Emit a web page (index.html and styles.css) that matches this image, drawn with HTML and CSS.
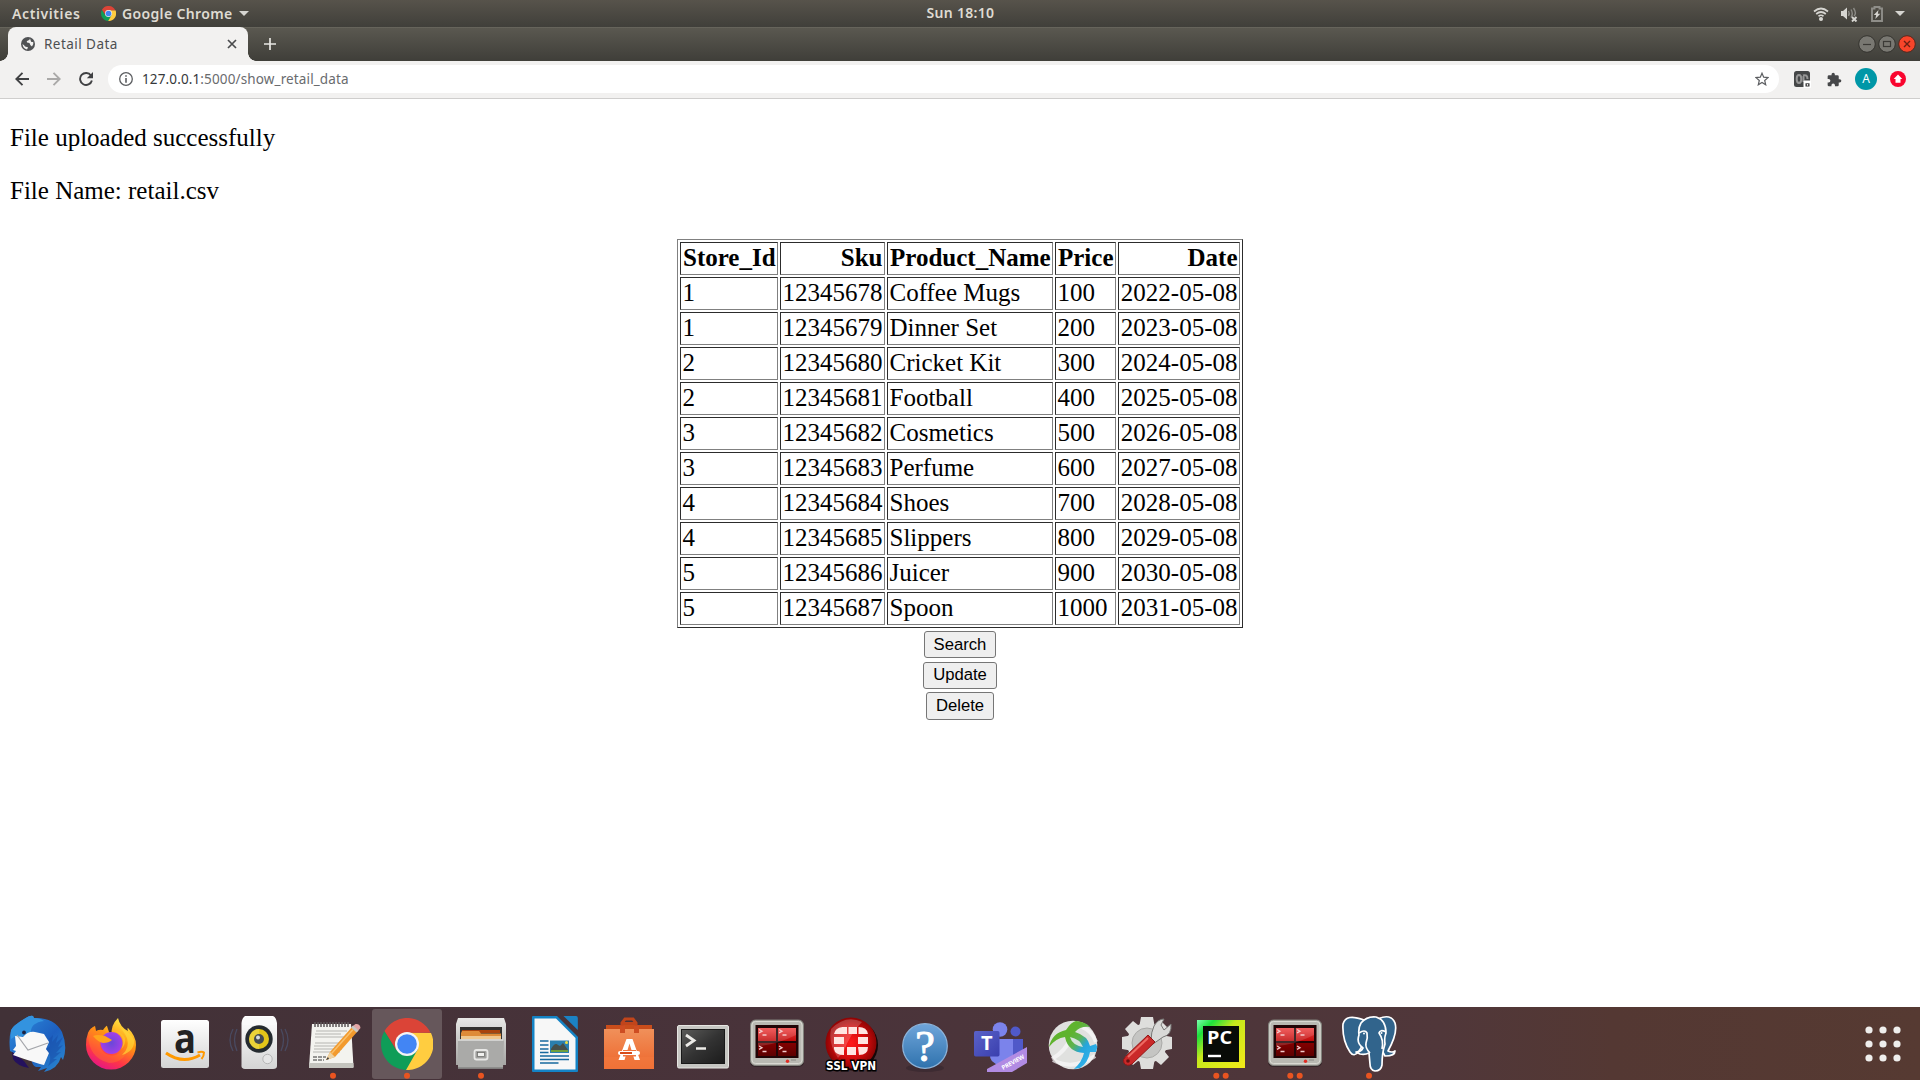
FILE: index.html
```html
<!DOCTYPE html>
<html lang="en">
<head>
<meta charset="utf-8">
<title>Retail Data</title>
<link rel="stylesheet" href="styles.css">
</head>
<body>
<svg class="defs" width="0" height="0" aria-hidden="true">
  <defs>
    <linearGradient id="silver" x2="0" y2="1"><stop stop-color="#e8e8e6"/><stop offset="1" stop-color="#a5a5a3"/></linearGradient>
    <linearGradient id="white" x2="0" y2="1"><stop stop-color="#fff"/><stop offset="1" stop-color="#d4d4d4"/></linearGradient>
    <linearGradient id="bird" x2="1" y2="1"><stop stop-color="#2f8fdd"/><stop offset=".55" stop-color="#1d5fc0"/><stop offset="1" stop-color="#2b8bd0"/></linearGradient>
    <linearGradient id="fox" x1=".8" y1="0" x2=".3" y2="1"><stop stop-color="#fff44f"/><stop offset=".4" stop-color="#ff980e"/><stop offset=".75" stop-color="#ff3647"/><stop offset="1" stop-color="#e31587"/></linearGradient>
    <linearGradient id="bag" x2="0" y2="1"><stop stop-color="#f0905a"/><stop offset="1" stop-color="#ee662b"/></linearGradient>
    <linearGradient id="black" x2="1" y2="1"><stop stop-color="#5a5a58"/><stop offset=".5" stop-color="#333"/><stop offset="1" stop-color="#1c1c1c"/></linearGradient>
    <linearGradient id="reds" x2="0" y2="1"><stop stop-color="#f04444"/><stop offset=".48" stop-color="#bd0909"/><stop offset=".52" stop-color="#850000"/><stop offset="1" stop-color="#5c0000"/></linearGradient>
    <radialGradient id="vpn"><stop stop-color="#ff1a1a"/><stop offset=".6" stop-color="#d40b0b"/><stop offset="1" stop-color="#8c0404"/></radialGradient>
    <linearGradient id="help" x2="0" y2="1"><stop stop-color="#6fa5da"/><stop offset="1" stop-color="#2f72ad"/></linearGradient>
    <linearGradient id="teams" x2="1" y2="1"><stop stop-color="#5a62c8"/><stop offset="1" stop-color="#3a3fae"/></linearGradient>
    <linearGradient id="pyc" x2="1" y2="1"><stop stop-color="#7dffb0"/><stop offset=".18" stop-color="#1de03c"/><stop offset=".42" stop-color="#c6e81c"/><stop offset="1" stop-color="#f3ea18"/></linearGradient>
    <linearGradient id="arc" gradientUnits="userSpaceOnUse" x1="30" y1="28" x2="54" y2="48"><stop stop-color="#5fb32e"/><stop offset=".3" stop-color="#5db350"/><stop offset=".6" stop-color="#25a5dc"/><stop offset="1" stop-color="#30b0ea"/></linearGradient>
    <radialGradient id="purple"><stop stop-color="#6a48d8"/><stop offset="1" stop-color="#a23fe8"/></radialGradient>
    <symbol id="chrome" viewBox="0 0 52 52">
      <path d="M3.5 13A26 26 0 0 0 26 52L36.500 32 26 26 15 32Z" fill="#0f9d58"/>
      <path d="M50 15A26 26 0 0 1 25 52L37 31 26 14.500Z" fill="#ffcd40"/>
      <path d="M3.500 13A26 26 0 0 1 49.500 14.700H26L15.500 32Z" fill="#db4437"/>
      <circle cx="26" cy="26" r="12" fill="#f4f4f4"/><circle cx="26" cy="26" r="9.800" fill="#4285f4"/>
    </symbol>
    <symbol id="terminator" viewBox="0 0 70 70">
      <rect x="8" y="12" width="54" height="46" rx="5" fill="#2c2024" opacity=".7"/>
      <rect x="8.500" y="11" width="53" height="45.500" rx="5" fill="#b9b9b2" stroke="#81817b"/>
      <rect x="10" y="12.500" width="50" height="42" rx="3.500" fill="none" stroke="#d9d9d2"/>
      <rect x="13.500" y="16" width="43" height="33" fill="#210506"/>
      <path d="M16 19H34V32H16ZM36 19H54V32H36ZM16 34H34V47H16ZM36 34H54V47H36Z" fill="url(#reds)"/>
      <path d="M16 19H54V26Q34 36 16 37Z" fill="#fff" opacity=".14"/>
      <path d="M17 20.500l3 1.700-3 1.700M37 20.500l3 1.700-3 1.700M17 37l3 1.700-3 1.700M37 37l3 1.700-3 1.700M20.500 26h4M40.500 26h4M20.500 42.500h4M40.500 42.500h4" fill="none" stroke="#f3caca" stroke-width="1.300"/>
      <circle cx="45.500" cy="52.300" r="1.700" fill="#e12b22"/><path d="M49 51h5" stroke="#8a8a84"/>
    </symbol>
  </defs>
</svg>

<header class="panel">
  <div class="panel-side">
    <span class="activities">Activities</span>
    <svg class="panel-chrome"><use href="#chrome"/></svg>
    <span class="app-name">Google Chrome</span>
    <svg class="caret" viewBox="0 0 10 5"><path d="M0 0H10L5 5Z"/></svg>
  </div>
  <span class="clock">Sun 18:10</span>
  <div class="panel-side tray">
    <svg width="16" height="16" viewBox="0 0 16 16" fill="none" stroke="#d6d5d1" stroke-width="1.700"><path d="M1 5.500Q8-.5 15 5.500M3.200 8Q8 4 12.800 8M5.500 10.200Q8 8.300 10.500 10.200"/><circle cx="8" cy="13" r="1.200" fill="#d6d5d1"/></svg>
    <svg width="18" height="16" viewBox="0 0 18 16"><path d="M1 5H3L7 1.500V13.500L3 10H1Z" fill="#d6d5d1"/><path d="M8.500 5q1.500 2.500 0 5M11 3.500q2.500 4 0 8M13.500 2q3.500 5.500.5 8" fill="none" stroke="#8c8b86" stroke-width="1.400"/><path d="M12 11l4.500 4.500M16.500 11L12 15.500" stroke="#d6d5d1" stroke-width="1.900"/></svg>
    <svg width="12" height="16" viewBox="0 0 12 16"><path d="M1 2.500H3.500V1H8.500V2.500H11V15H1Z" fill="none" stroke="#8f8e89" stroke-width="1.900"/><path d="M7.500 4L2.800 9H5.200L4.300 13 9.300 7.800H6.800Z" fill="#d6d5d1"/></svg>
    <svg class="caret" viewBox="0 0 10 5"><path d="M0 0H10L5 5Z"/></svg>
  </div>
</header>

<div class="tabstrip">
  <div class="tab">
    <svg width="14" height="14" viewBox="0 0 14 14"><circle cx="7" cy="7" r="7" fill="#505254"/><path d="M1.500 7Q3.500 8 4 9.500L7 10.200Q6.500 11.500 6 12.500Q2 11.500 1.500 7ZM9 1.600Q8.500 3.500 7 3.500Q5 4 6 5.500Q9.500 5.500 9.200 8L11 9.500Q13 7 12.200 4.700Q11 5.500 10 4.500Z" fill="#f2f1f0"/></svg>
    <span class="tab-title">Retail Data</span>
    <svg width="10" height="10" viewBox="0 0 10 10"><path d="M1 1L9 9M9 1L1 9" stroke="#4a4b4d" stroke-width="1.700"/></svg>
  </div>
  <svg class="new-tab" viewBox="0 0 12 12"><path d="M6 0V12M0 6H12" stroke="#e8e7e3" stroke-width="1.700"/></svg>
  <div class="window-buttons">
    <svg width="18" height="18" viewBox="0 0 18 18"><circle cx="9" cy="9" r="8.300" fill="#797872" stroke="#35342f"/><path d="M5 9.500H13" stroke="#3b3a36" stroke-width="1.200"/></svg>
    <svg width="18" height="18" viewBox="0 0 18 18"><circle cx="9" cy="9" r="8.300" fill="#797872" stroke="#35342f"/><rect x="5.500" y="6.500" width="7" height="5" fill="none" stroke="#3b3a36" stroke-width="1.200"/></svg>
    <svg width="18" height="18" viewBox="0 0 18 18"><circle cx="9" cy="9" r="8.300" fill="#f7452a" stroke="#57281e"/><path d="M6 6L12 12M12 6L6 12" stroke="#6b2013" stroke-width="1.400"/></svg>
  </div>
</div>

<nav class="toolbar">
  <svg width="14" height="14" viewBox="0 0 14 14" fill="none" stroke="#404143" stroke-width="1.900"><path d="M14 7H1.500M7.500.8L1.300 7l6.200 6.200"/></svg>
  <svg width="14" height="14" viewBox="0 0 14 14" fill="none" stroke="#aaa9a8" stroke-width="1.900"><path d="M0 7H12.500M6.500.8L12.700 7l-6.200 6.200"/></svg>
  <svg width="14" height="14" viewBox="0 0 14 14"><path d="M12 3.500A6 6 0 1 0 12.900 8.500" fill="none" stroke="#404143" stroke-width="1.900"/><path d="M14 0V6.200H7.800Z" fill="#404143"/></svg>
  <div class="address">
    <svg width="14" height="14" viewBox="0 0 14 14"><circle cx="7" cy="7" r="6.300" fill="none" stroke="#5c5e61" stroke-width="1.300"/><path d="M7 6V10.700M7 3.300V4.800" stroke="#5c5e61" stroke-width="1.600"/></svg>
    <span class="url"><b>127.0.0.1</b>:5000/show_retail_data</span>
    <svg width="14" height="14" viewBox="0 0 14 14"><path d="M7 1.200L8.700 5.200 13 5.600 9.700 8.500 10.700 12.800 7 10.500 3.300 12.800 4.300 8.500 1 5.600 5.300 5.200Z" fill="none" stroke="#5c5e61" stroke-width="1.200"/></svg>
  </div>
  <svg class="ext-gray" width="17" height="17" viewBox="0 0 17 17"><rect width="16" height="16" rx="2.500" fill="#444647"/><ellipse cx="5" cy="8" rx="2.300" ry="4" fill="none" stroke="#969696" stroke-width="2"/><path d="M9 4.500Q13.500 3 13.500 8M9.500 5V11" fill="none" stroke="#969696" stroke-width="2"/><rect x="9.500" y="9.500" width="7.500" height="7.500" rx="1" fill="#fff"/><path d="M11.500 12.300h4v3.200h-4Z" fill="#333"/><circle cx="13.500" cy="13.900" r=".8" fill="#fff"/></svg>
  <svg class="ext-puzzle" width="15" height="15" viewBox="1 0 23 23"><path d="M20.500 11H19V7a2 2 0 0 0-2-2h-4V3.500a2.500 2.500 0 0 0-5 0V5H4a2 2 0 0 0-2 2v3.800h1.500a2.700 2.700 0 0 1 0 5.400H2V20a2 2 0 0 0 2 2h3.800v-1.500a2.700 2.700 0 0 1 5.400 0V22H17a2 2 0 0 0 2-2v-4h1.500a2.500 2.500 0 0 0 0-5Z" fill="#464749"/></svg>
  <span class="avatar">A</span>
  <svg class="update" width="16" height="16" viewBox="0 0 16 16"><circle cx="8" cy="8" r="8" fill="#f9052e"/><path d="M8 3.500L12.300 8H10.500V11.700H5.500V8H3.700Z" fill="#fff"/></svg>
</nav>

<main class="page">
  <p>File uploaded successfully</p>
  <p>File Name: retail.csv</p>
  <table class="retail">
    <colgroup><col class="c-store"><col class="c-sku"><col class="c-product"><col class="c-price"><col class="c-date"></colgroup>
    <tr><th>Store_Id</th><th class="num">Sku</th><th>Product_Name</th><th>Price</th><th class="num">Date</th></tr>
    <tr><td>1</td><td class="num">12345678</td><td>Coffee Mugs</td><td>100</td><td class="num">2022-05-08</td></tr>
    <tr><td>1</td><td class="num">12345679</td><td>Dinner Set</td><td>200</td><td class="num">2023-05-08</td></tr>
    <tr><td>2</td><td class="num">12345680</td><td>Cricket Kit</td><td>300</td><td class="num">2024-05-08</td></tr>
    <tr><td>2</td><td class="num">12345681</td><td>Football</td><td>400</td><td class="num">2025-05-08</td></tr>
    <tr><td>3</td><td class="num">12345682</td><td>Cosmetics</td><td>500</td><td class="num">2026-05-08</td></tr>
    <tr><td>3</td><td class="num">12345683</td><td>Perfume</td><td>600</td><td class="num">2027-05-08</td></tr>
    <tr><td>4</td><td class="num">12345684</td><td>Shoes</td><td>700</td><td class="num">2028-05-08</td></tr>
    <tr><td>4</td><td class="num">12345685</td><td>Slippers</td><td>800</td><td class="num">2029-05-08</td></tr>
    <tr><td>5</td><td class="num">12345686</td><td>Juicer</td><td>900</td><td class="num">2030-05-08</td></tr>
    <tr><td>5</td><td class="num">12345687</td><td>Spoon</td><td>1000</td><td class="num">2031-05-08</td></tr>
  </table>
  <div class="actions">
    <button class="search">Search</button>
    <button class="edit">Update</button>
    <button class="delete">Delete</button>
  </div>
</main>

<footer class="dock">
  <!-- Thunderbird -->
  <svg viewBox="0 0 70 70"><path d="M12 17Q20 11 24 9Q28 6 31 7L32 9Q52 8 60 23Q66 38 61 51L59 48Q56 60 42 63L45 59 36 62 39 58 34 58Q30 56 30 52L12 44 8 42Q6 22 12 17Z" fill="url(#bird)"/><path d="M10 43L11 50Q15 57 27 59L22 52Z" fill="#24115d"/><path d="M9 21Q12 16 22 10Q28 6 31 7L32 9Q38 9 42 12Q28 14 29 24L18 28Q14 26 9 30Z" fill="#3393df"/><path d="M13 27L21 28Q26 22 33 23L42 25 47 33 44 40 47 44 42 56Q34 54 11 46L14 42 11 41 14 37Z" fill="#f8f8f8"/><path d="M15 26L26 41 46 34" fill="none" stroke="#a4a6ab" stroke-width="1.200"/><circle cx="22" cy="23.500" r="1.900" fill="#1b2345"/><path d="M47 30L51 26 50 33 56 26 54 34 61 28 56 38 61 36 54 44 59 43 51 50 55 50 46 57Q50 50 47 44L44 40 48 37Z" fill="#174da8" opacity=".55"/></svg>
  <!-- Firefox -->
  <svg viewBox="0 0 70 70"><path d="M12 24Q14 19 19 17L20 22Q24 20 27 21Q31 16 31 17L33 23 36 26Q34 17 42 9Q44 18 52 22Q51 19 52 19Q60 27 60 36A25 24.500 0 0 1 10 36Q10 29 12 24Z" fill="url(#fox)"/><path d="M12 24Q14 19 19 17L20 22Q25 20 29 22L34 28Q20 28 25 40Q30 48 40 46Q50 42 50 33L53 38Q48 54 33 54Q12 49 12 24Z" fill="#ff8a20" opacity=".35"/><circle cx="35.500" cy="34" r="11" fill="url(#purple)"/><path d="M17 27Q21 25 29 27L36 31Q33 34 27 34Q22 33 17 27Z" fill="#ffa41c"/><path d="M37 22Q46 24 47 31Q48 36 45 40Q50 36 49 29Q46 22 37 22Z" fill="#ffb92a"/><path d="M40 14Q48 22 51 29Q54 39 46 46Q59 42 58 31Q55 24 47 20Q42 17 40 14Z" fill="#ffd83b" opacity=".65"/></svg>
  <!-- Amazon -->
  <svg viewBox="0 0 70 70"><rect x="11" y="11" width="48" height="48" rx="2.500" fill="url(#white)"/><text x="24" y="44" class="amazon-a" textLength="22" lengthAdjust="spacingAndGlyphs">a</text><path d="M16 44Q33 56 50 46" fill="none" stroke="#f90" stroke-width="3"/><path d="M47.500 43.500Q52 42 54 43.500Q54 47 51.500 50" fill="none" stroke="#f90" stroke-width="2"/></svg>
  <!-- Rhythmbox -->
  <svg viewBox="0 0 70 70"><path d="M13 20Q8 31 13 42M57 20Q62 31 57 42M9 20Q3 31 9 42M61 20Q67 31 61 42" fill="none" stroke="#4d5a7b" stroke-width="1.300" opacity=".6"/><path d="M21 7H49Q52 8 53 14V57Q53 60 49 60H21Q17 60 17.500 56V14Q18 9 21 7Z" fill="url(#white)"/><path d="M21 8H49L51 16H19Z" fill="#fafafa"/><circle cx="35" cy="30" r="13.700" fill="#252b30"/><circle cx="35" cy="30" r="10" fill="#e3c519"/><path d="M25 30A10 10 0 0 1 35 20V40A10 10 0 0 1 25 30Z" fill="#f3df58" opacity=".5"/><circle cx="35" cy="30" r="5" fill="#454b50"/><circle cx="34" cy="28.500" r="2" fill="#d7dce0"/><circle cx="43.500" cy="50" r="4.700" fill="#e6e6e6" stroke="#b6b6b6"/></svg>
  <!-- Text editor -->
  <svg viewBox="0 0 70 70"><path d="M14 15H53L55.500 58H11Z" fill="#f3f3ef"/><path d="M11 54H55.500V59H11Z" fill="#c4c4be"/><path d="M18 22H49M17 25H43M17 28H47M17 34H44M16 37H40M16 40H44M15 43H42" stroke="#b5b5b1" stroke-width="1"/><path d="M15 48H28M15 51H26" stroke="#363636" stroke-width="1.200" stroke-dasharray="4 1"/><path d="M17 13V18M20 13V18M23 13V18M26 13V18M29 13V18M32 13V18M35 13V18M38 13V18M41 13V18M44 13V18M47 13V18M50 13V18" stroke="#5c5758" stroke-width="1.500"/><path d="M32 43L54 18 59 23 37 48 28 51Z" fill="#f29a2d"/><path d="M32 43L37 48 28 51Z" fill="#ecd2a4"/><path d="M30 48L31 50 28 51Z" fill="#333"/><path d="M53.500 18L59 23 62.500 19Q62 14.500 57.500 15Z" fill="#e2a5a5"/><path d="M53 18.500L55 16.500 60.500 21.500 58.500 23.500Z" fill="#c9c9c5"/><path d="M33.500 44.500L55 20.500" stroke="#f9c06c" stroke-width="1.500"/><circle cx="35" cy="66.700" r="3" class="running"/></svg>
  <!-- Chrome -->
  <svg viewBox="0 0 70 70" class="active"><use href="#chrome" x="9" y="9" width="52" height="52"/><circle cx="35" cy="66.700" r="3" class="running"/></svg>
  <!-- Files -->
  <svg viewBox="0 0 70 70"><path d="M12 9H58L60 15V56H10V15Z" fill="url(#silver)"/><path d="M14 18H56V32H14Z" fill="#33312f"/><path d="M16 21H54V24H16Z" fill="#a9440d"/><path d="M15 24L16 22H33L35 24.500H55V31H15Z" fill="#de8b38"/><path d="M15 27H55V31H15Z" fill="#efc78e"/><path d="M12 30.500H58L57 59.500H12Z" fill="#aaaaa8"/><path d="M12 31H57.500" stroke="#dededc" stroke-width="1.500"/><path d="M12 59H57" stroke="#858583" stroke-width="1.500"/><rect x="28.500" y="41" width="13" height="9.500" rx="2" fill="#a0a09e" stroke="#e8e8e6" stroke-width="1.800"/><rect x="31.500" y="43.500" width="7" height="4" fill="#f1f1ef" stroke="#646462" stroke-width=".7"/><circle cx="35" cy="66.700" r="3" class="running"/></svg>
  <!-- Writer -->
  <svg viewBox="0 0 70 70"><path d="M12 8Q12 7 13 7H37L58 28V62Q58 63 57 63H13Q12 63 12 62Z" fill="#1483c5"/><path d="M14.500 9.500H36L55.500 29V60.500H14.500Z" fill="#f7f7f7"/><path d="M43.500 7H56Q57.800 7 57.800 9V21Z" fill="#1b82c4"/><path d="M20 32H28.500M20 36H28.500M20 40H28.500M20 43.500H28.500M20 47H49M20 50.500H49M20 54H38.500" stroke="#17699e" stroke-width="1.400"/><path d="M30 31.500H49V44H30Z" fill="#2a7fae"/><path d="M31 40Q35 33 38 36L40 37 43 34 48 41V43H31Z" fill="#46504a"/><path d="M31 41H48V43H31Z" fill="#6fa03c"/><circle cx="46.500" cy="33.500" r="1.500" fill="#f0df3e"/></svg>
  <!-- Software -->
  <svg viewBox="0 0 70 70"><path d="M12 16H58V22H12Z" fill="#c94d1b"/><path d="M10 20H60V60H10Z" fill="url(#bag)"/><path d="M10 48H60V60H10Z" fill="#f27a40" opacity=".6"/><path d="M28 23V14L31 10H39L42 14V23M28 14.500H42" fill="none" stroke="#c1451b" stroke-width="3"/><path d="M26 16.500H31V24H26ZM40 16.500H45V24H40Z" fill="#ce4d22"/><path d="M32.500 30H38.500L46 51H40.500L35.500 34.500 30.500 51H24.500Z" fill="#fff"/><path d="M29 41H42V47.500H29Z" fill="#ef7540"/><rect x="24" y="42" width="22" height="4" rx="2" fill="#fff"/><rect x="26" y="43" width="12" height="2" fill="#d84c1b"/></svg>
  <!-- Terminal -->
  <svg viewBox="0 0 70 70"><rect x="9.500" y="16.500" width="51" height="42.500" rx="1.500" fill="#c6c6c2" stroke="#e6e6e2"/><rect x="13" y="20" width="44" height="35" fill="#191919"/><rect x="14" y="21" width="42" height="33" fill="url(#black)"/><path d="M18 26L26 31.500 18 37" fill="none" stroke="#ecebe7" stroke-width="2.800"/><path d="M28 39.500H38" stroke="#ecebe7" stroke-width="2.500"/></svg>
  <!-- Terminator -->
  <svg viewBox="0 0 70 70"><use href="#terminator" width="70" height="70"/></svg>
  <!-- SSL VPN -->
  <svg viewBox="0 0 70 70"><circle cx="36.500" cy="36" r="25.500" fill="#160708"/><circle cx="35" cy="34" r="25.500" fill="url(#vpn)"/><path d="M15 20Q30 5 46 13Q34 25 28 42L22 49Q12 35 15 20Z" fill="#fff" opacity=".2"/><path d="M26.500 18H31V25H18Q19 19 26.500 18ZM32.500 18H41V25H32.500ZM42.500 18Q51 18 52 25H42.500ZM18 28H28V35H18ZM42 28H52V35H42ZM18 38H28V46Q19 46 18 40ZM31 38H40V46H31ZM42 38H52Q52 46 43 46Z" fill="#ffe5e1"/><text x="10" y="61" class="vpn-label" textLength="50" lengthAdjust="spacingAndGlyphs">SSL VPN</text></svg>
  <!-- Help -->
  <svg viewBox="0 0 70 70"><ellipse cx="35" cy="59" rx="19" ry="4" fill="#302229" opacity=".5"/><circle cx="35" cy="37" r="22.300" fill="url(#help)" stroke="#8db4da" stroke-width="1.200"/><text x="35" y="52" class="help-mark" text-anchor="middle">?</text></svg>
  <!-- Teams -->
  <svg viewBox="0 0 70 70"><circle cx="36" cy="20.500" r="7.300" fill="#7b83eb"/><circle cx="51.500" cy="22.500" r="5" fill="#5059c9"/><path d="M44 30H59V46Q58 54 49 53Z" fill="#5059c9"/><path d="M26 30H49V47Q47 56 36 56Q25 54 26 45Z" fill="#7b83eb"/><rect x="10" y="22" width="25.500" height="25.500" rx="1.700" fill="url(#teams)"/><text x="22.700" y="41" text-anchor="middle" class="teams-t">T</text><path d="M23 60L63 38V54L48 63H23Z" fill="#b18be3"/><text class="preview" transform="translate(39 61) rotate(-29)" textLength="25">PREVIEW</text></svg>
  <!-- AnyConnect -->
  <svg viewBox="0 0 70 70"><circle cx="35" cy="36" r="24.300" fill="#e0e1df"/><path d="M14 50Q28 42 33 28M15 51Q35 62 57 47M44 18Q54 22 58 33" fill="none" stroke="#fafafa" stroke-width="4" opacity=".7"/><path d="M11 38Q14 24 28 21Q33 13 38 12Q48 13 52 18Q42 17 37 23Q50 27 52 37L58 35 59.300 38 58 43 52 43Q50 54 42 59L36 60Q44 53 46 44Q30 43 27 28Q18 29 11 38Z" fill="url(#arc)"/><path d="M32 28Q34 36 45 38Q42 30 32 28Z" fill="#d5e3dc"/></svg>
  <!-- Settings -->
  <svg viewBox="0 0 70 70"><g fill="#dededc"><circle cx="35" cy="34" r="20"/><path d="M29 8H41L43 19H27ZM29 60H41L43 49H27ZM10 28V40L21 42V26ZM60 28V40L49 42V26ZM13 20L21 12 31 20 21 30ZM57 20L49 12 39 20 49 30ZM13 48L21 56 31 48 21 38ZM57 48L49 56 39 48 49 38Z"/></g><circle cx="35" cy="34" r="15" fill="#c5c5c3" stroke="#aaaaa8"/><path d="M39 32Q39 23 42 17Q46 10 52 10L49 16 52 21 59 15Q60 26 51 28L41 35Z" fill="#d9d9d7" stroke="#787876"/><path d="M14 47L36 26 43 33 20 55Q15 58 12 54Q10 51 14 47Z" fill="#ca2929" stroke="#921717"/><path d="M16 48L36 29" stroke="#ee6b63" stroke-width="2"/><circle cx="16" cy="52" r="1.800" fill="#631313"/></svg>
  <!-- PyCharm -->
  <svg viewBox="0 0 70 70"><rect x="11" y="11" width="48" height="48" fill="url(#pyc)"/><rect x="17" y="17" width="36" height="36" fill="#080b07"/><text x="21" y="35" class="pc" textLength="25" lengthAdjust="spacingAndGlyphs">PC</text><path d="M22 47H35" stroke="#fff" stroke-width="2.400"/><circle cx="30.300" cy="66.700" r="3" class="running"/><circle cx="39.700" cy="66.700" r="3" class="running"/></svg>
  <!-- Terminator -->
  <svg viewBox="0 0 70 70"><use href="#terminator" width="70" height="70"/><circle cx="30.300" cy="66.700" r="3" class="running"/><circle cx="39.700" cy="66.700" r="3" class="running"/></svg>
  <!-- pgAdmin -->
  <svg viewBox="0 0 70 70"><g fill="#31648c" stroke="#fff" stroke-width="1.700" stroke-linejoin="round"><path d="M44 10Q57 4 61 14Q64 24 54 42Q58 44 61 42Q61 47 51 47L46 38Z"/><path d="M30 11Q12 4 9 15Q8 31 16 43Q20 49 25 42L31 33Z"/><path d="M27 14Q33 7 42 8Q52 11 52 24Q50 29 51 35Q48 44 48 56Q47 62 41 62Q36 61 36 55L35 44Q31 46 26 45L22 43Q27 43 29 39Q22 34 25 26Q24 19 27 14Z"/><path d="M25 24Q31 20 33 24Q34 29 32 34Q31 39 36 44M52 23Q46 20 45 24Q50 31 48 40" fill="none"/></g><circle cx="30" cy="24.500" r="1" fill="#fff"/><circle cx="47.500" cy="24" r="1" fill="#fff"/><circle cx="35" cy="66.700" r="3" class="running"/></svg>
  <svg class="apps" viewBox="0 0 70 70" fill="#efeeec"><circle cx="21" cy="21" r="3.600"/><circle cx="35" cy="21" r="3.600"/><circle cx="49" cy="21" r="3.600"/><circle cx="21" cy="35" r="3.600"/><circle cx="35" cy="35" r="3.600"/><circle cx="49" cy="35" r="3.600"/><circle cx="21" cy="49" r="3.600"/><circle cx="35" cy="49" r="3.600"/><circle cx="49" cy="49" r="3.600"/></svg>
</footer>
</body>
</html>
```
FILE: styles.css
```css
* { box-sizing: border-box; }
body {
  margin: 0;
  width: 1920px;
  height: 1080px;
  display: flex;
  flex-direction: column;
  overflow: hidden;
  background: #fff;
  font-family: "Noto Sans", "Open Sans", sans-serif;
}
svg { display: block; flex: none; }
.defs { width: 0; height: 0; }

/* Desktop panel */
.panel {
  height: 27px;
  flex: none;
  display: grid;
  grid-template-columns: 1fr auto 1fr;
  align-items: center;
  background: linear-gradient(#57534b, #403f3a);
  color: #dfdbd2;
  font-size: 14px;
  font-weight: 600;
  line-height: 24px;
  white-space: nowrap;
}
.panel-side { display: flex; align-items: center; height: 26px; }
.activities { width: 89px; padding-left: 12px; letter-spacing: .6px; }
.panel-chrome { width: 15px; height: 15px; margin-left: 12px; }
.app-name { width: 110px; margin: 0 7px 0 6px; letter-spacing: .35px; }
.caret { width: 10px; height: 5px; fill: #d6d5d1; }
.clock { height: 26px; padding-left: 1px; letter-spacing: .3px; }
.tray { justify-content: flex-end; padding-right: 15px; }
.tray svg:nth-child(2) { margin-left: 11px; }
.tray svg:nth-child(3) { margin-left: 13px; }
.tray svg:nth-child(4) { margin-left: 12px; }

/* Browser window */
.tabstrip {
  height: 34px;
  flex: none;
  display: flex;
  align-items: center;
  padding: 0 5px 1px 8px;
  border-top: 1px solid #66645b;
  background: linear-gradient(#5a5850, #3f3e39);
}
.tab {
  position: relative;
  width: 240px;
  height: 34px;
  display: flex;
  align-items: center;
  padding: 0 11px 1px 13px;
  border-radius: 8px 8px 0 0;
  background: #f2f1f0;
  color: #4d4f51;
  font-size: 13.500px;
  line-height: 18px;
}
.tab::before, .tab::after {
  content: "";
  position: absolute;
  bottom: 0;
  width: 8px;
  height: 8px;
}
.tab::before { left: -8px; background: radial-gradient(circle at 0 0, transparent 7.5px, #f2f1f0 8px); }
.tab::after { right: -8px; background: radial-gradient(circle at 100% 0, transparent 7.5px, #f2f1f0 8px); }
.tab-title { flex: 1; margin-left: 9px; letter-spacing: .45px; }
.new-tab { width: 12px; height: 12px; margin-left: 16px; }
.window-buttons { display: flex; gap: 2px; margin-left: auto; margin-right: -1px; }
.toolbar {
  height: 38px;
  flex: none;
  display: flex;
  align-items: center;
  gap: 18px;
  padding: 0 14px 1px 15px;
  border-bottom: 1px solid #cfcecd;
  background: #f2f1f0;
}
.address {
  width: 1672px;
  height: 28px;
  margin-left: -3px;
  display: flex;
  align-items: center;
  padding: 0 10px 0 11px;
  border-radius: 14px;
  background: #fff;
}
.url { flex: 1; margin-left: 9px; color: #696b6e; font-size: 13.500px; line-height: 20px; letter-spacing: .13px; }
.url b { color: #36383b; font-weight: 400; }
.ext-gray { margin-left: -3px; }
.ext-puzzle { margin-left: -2px; }
.avatar {
  width: 22px;
  height: 22px;
  margin-left: -5px;
  border-radius: 50%;
  background: #0097a7;
  color: #fff;
  font-size: 12px;
  line-height: 22px;
  text-align: center;
}
.update { margin-left: -5px; }

/* Document */
.page {
  height: 908px;
  flex: none;
  padding: 0 10px;
  font: 25px/28px "Liberation Serif", "Times New Roman", serif;
  color: #000;
  overflow: hidden;
}
.page p { margin: 25px 0; }
.retail {
  width: 566px;
  margin: 34px auto 0;
  table-layout: fixed;
  border: 1px solid;
  border-color: #808080 #2c2c2c #2c2c2c #808080;
  border-collapse: separate;
  border-spacing: 2px;
}
.c-store { width: 98px; }
.c-sku { width: 105px; }
.c-product { width: 166px; }
.c-price { width: 61px; }
.c-date { width: 122px; }
.retail th, .retail td {
  height: 33px;
  padding: 0 1.5px 2px;
  border: 1px solid;
  border-color: #2c2c2c #808080 #808080 #2c2c2c;
  text-align: left;
  line-height: 29px;
  white-space: nowrap;
}
.retail th { padding-left: 2px; }
.retail .num { text-align: right; }
.actions { display: flex; flex-direction: column; align-items: center; gap: 3px; margin-top: 3px; }
.actions button {
  height: 27px;
  padding: 0;
  border: 1px solid #767676;
  border-radius: 3px;
  background: #efefef;
  color: #000;
  font: 16.667px/24px "Liberation Sans", Arial, sans-serif;
}
.actions .search { width: 72px; margin-bottom: 1px; }
.actions .edit { width: 74px; padding-bottom: 2px; }
.actions .delete { width: 68px; height: 28px; }

/* Dock */
.dock {
  height: 73px;
  flex: none;
  display: flex;
  align-items: center;
  gap: 4px;
  padding: 1px 2px 0;
  background: linear-gradient(90deg, #413137, #49333a 40%, #50373a 75%, #543833 84%, #563a32);
}
.dock svg { width: 70px; height: 70px; }
.dock .active { border-radius: 3px; background: #66575b; }
.dock .apps { margin-left: auto; }
.running { fill: #e95420; }
.amazon-a { font: bold 42px "Open Sans", sans-serif; fill: #222; }
.vpn-label { font: bold 12px "DejaVu Sans", sans-serif; fill: #fff; stroke: #000; stroke-width: 3px; paint-order: stroke; }
.help-mark { font: 44px "Liberation Serif", serif; fill: #fff; stroke: #fff; stroke-width: 1px; }
.teams-t { font: bold 20px "Open Sans", sans-serif; fill: #fff; }
.preview { font: bold 6px "Open Sans", sans-serif; fill: #fff; }
.pc { font: bold 18px "Open Sans", sans-serif; fill: #fff; }
```
